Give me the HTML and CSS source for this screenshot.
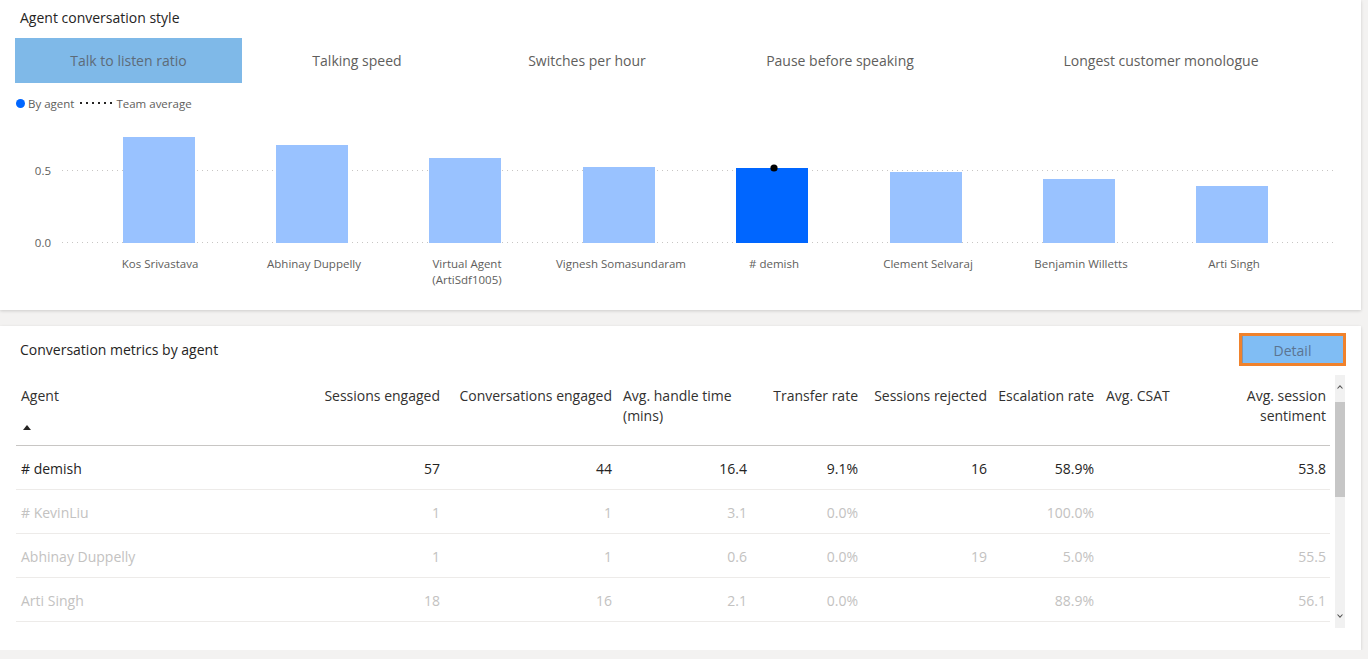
FILE: index.html
```html
<!DOCTYPE html>
<html lang="en">
<head>
<meta charset="utf-8">
<title>Agent conversation style</title>
<link rel="stylesheet" href="styles.css">
</head>
<body>
<div class="page">
  <section class="card card-style">
    <h2 class="card-title">Agent conversation style</h2>
    <div class="tabs">
      <div class="tab tab-active tab-w1">Talk to listen ratio</div>
      <div class="tab tab-w2">Talking speed</div>
      <div class="tab tab-w3">Switches per hour</div>
      <div class="tab tab-w4">Pause before speaking</div>
      <div class="tab tab-w5">Longest customer monologue</div>
    </div>
    <div class="legend">
      <span class="legend-dot"></span>
      <span class="legend-text">By agent</span>
      <svg class="legend-dots" width="34" height="4" viewBox="0 0 34 4"><g fill="#252423"><rect x="1" y="1" width="2" height="2"/><rect x="7" y="1" width="2" height="2"/><rect x="13" y="1" width="2" height="2"/><rect x="19" y="1" width="2" height="2"/><rect x="25" y="1" width="2" height="2"/><rect x="31" y="1" width="2" height="2"/></g></svg>
      <span class="legend-text">Team average</span>
    </div>
    <svg class="chart" width="1361" height="199" viewBox="0 111 1361 199">
      <g class="grid">
        <line x1="62" y1="170.5" x2="1333" y2="170.5"/>
        <line x1="62" y1="242.5" x2="1333" y2="242.5"/>
      </g>
      <g class="axis-labels">
        <text x="51" y="170" text-anchor="end" dominant-baseline="central">0.5</text>
        <text x="51" y="242" text-anchor="end" dominant-baseline="central">0.0</text>
      </g>
      <g class="bars">
        <rect x="123" y="137" width="72" height="106"/>
        <rect x="276" y="145" width="72" height="98"/>
        <rect x="429" y="158" width="72" height="85"/>
        <rect x="583" y="167" width="72" height="76"/>
        <rect class="bar-selected" x="736" y="168" width="72" height="75"/>
        <rect x="890" y="172" width="72" height="71"/>
        <rect x="1043" y="179" width="72" height="64"/>
        <rect x="1196" y="186" width="72" height="57"/>
      </g>
      <circle cx="774" cy="168" r="3.6" fill="#000"/>
      <g class="cat-labels">
        <text x="160" y="263" text-anchor="middle" dominant-baseline="central">Kos Srivastava</text>
        <text x="314" y="263" text-anchor="middle" dominant-baseline="central">Abhinay Duppelly</text>
        <text x="467" y="263" text-anchor="middle" dominant-baseline="central">Virtual Agent</text>
        <text x="467" y="279" text-anchor="middle" dominant-baseline="central">(ArtiSdf1005)</text>
        <text x="621" y="263" text-anchor="middle" dominant-baseline="central">Vignesh Somasundaram</text>
        <text x="774" y="263" text-anchor="middle" dominant-baseline="central"># demish</text>
        <text x="928" y="263" text-anchor="middle" dominant-baseline="central">Clement Selvaraj</text>
        <text x="1081" y="263" text-anchor="middle" dominant-baseline="central">Benjamin Willetts</text>
        <text x="1234" y="263" text-anchor="middle" dominant-baseline="central">Arti Singh</text>
      </g>
    </svg>
  </section>

  <section class="card card-metrics">
    <div class="metrics-head">
      <h2 class="card-title">Conversation metrics by agent</h2>
      <button class="detail-btn" type="button">Detail</button>
    </div>
    <div class="table-wrap">
      <div class="table">
        <div class="thead">
          <div class="th th-agent"><span>Agent</span><span class="sort-up"></span></div>
          <div class="th">Sessions engaged</div>
          <div class="th">Conversations engaged</div>
          <div class="th th-left th-aht">Avg. handle time<br>(mins)</div>
          <div class="th">Transfer rate</div>
          <div class="th">Sessions rejected</div>
          <div class="th">Escalation rate</div>
          <div class="th th-left th-csat">Avg. CSAT</div>
          <div class="th">Avg. session<br>sentiment</div>
        </div>
        <div class="tr tr-active">
          <div class="td td-agent"># demish</div>
          <div class="td">57</div>
          <div class="td">44</div>
          <div class="td">16.4</div>
          <div class="td">9.1%</div>
          <div class="td">16</div>
          <div class="td">58.9%</div>
          <div class="td"></div>
          <div class="td">53.8</div>
        </div>
        <div class="tr tr-dim">
          <div class="td td-agent"># KevinLiu</div>
          <div class="td">1</div>
          <div class="td">1</div>
          <div class="td">3.1</div>
          <div class="td">0.0%</div>
          <div class="td"></div>
          <div class="td">100.0%</div>
          <div class="td"></div>
          <div class="td"></div>
        </div>
        <div class="tr tr-dim">
          <div class="td td-agent">Abhinay Duppelly</div>
          <div class="td">1</div>
          <div class="td">1</div>
          <div class="td">0.6</div>
          <div class="td">0.0%</div>
          <div class="td">19</div>
          <div class="td">5.0%</div>
          <div class="td"></div>
          <div class="td">55.5</div>
        </div>
        <div class="tr tr-dim">
          <div class="td td-agent">Arti Singh</div>
          <div class="td">18</div>
          <div class="td">16</div>
          <div class="td">2.1</div>
          <div class="td">0.0%</div>
          <div class="td"></div>
          <div class="td">88.9%</div>
          <div class="td"></div>
          <div class="td">56.1</div>
        </div>
      </div>
      <div class="scrollbar">
        <svg class="scroll-arrow" width="10" height="8" viewBox="0 0 10 8"><path d="M2.5 5.5 L5 2.8 L7.5 5.5" fill="none" stroke="#555" stroke-width="1.1"/></svg>
        <div class="scroll-track"><div class="scroll-thumb"></div></div>
        <svg class="scroll-arrow" width="10" height="8" viewBox="0 0 10 8"><path d="M2.5 2.5 L5 5.2 L7.5 2.5" fill="none" stroke="#555" stroke-width="1.1"/></svg>
      </div>
    </div>
  </section>
</div>
</body>
</html>
```

FILE: styles.css
```css
* { box-sizing: border-box; }

html, body {
  margin: 0;
  padding: 0;
  background: #f3f2f1;
  font-family: "Open Sans", "Noto Sans", "Liberation Sans", sans-serif;
  color: #252423;
}

.page {
  width: 1361px;
  display: flex;
  flex-direction: column;
  gap: 16px;
}

.card {
  background: #ffffff;
  box-shadow: 0 1px 3px rgba(0, 0, 0, 0.16);
}

.card-style {
  height: 310px;
  padding-top: 8px;
}

.card-title {
  margin: 0 0 0 20px;
  font-size: 14px;
  font-weight: 400;
  line-height: 20px;
  color: #252423;
}

/* Tabs */
.tabs {
  display: flex;
  margin: 10px 0 0 15px;
  height: 45px;
}

.tab {
  height: 45px;
  line-height: 46px;
  text-align: center;
  font-size: 14px;
  color: #605e5c;
  white-space: nowrap;
}

.tab-active {
  background: #7fb9e8;
  color: #5d6b78;
}

.tab-w1 { width: 227px; }
.tab-w2 { width: 230px; }
.tab-w3 { width: 230px; }
.tab-w4 { width: 276px; }
.tab-w5 { width: 366px; }

/* Legend */
.legend {
  display: flex;
  align-items: center;
  gap: 3px;
  margin: 12px 0 0 16px;
  height: 16px;
  font-size: 11.5px;
  color: #605e5c;
}

.legend-dot {
  width: 9px;
  height: 9px;
  border-radius: 50%;
  background: #0066ff;
}

.legend-dots { display: block; margin: 0 0 0 2px; }

/* Chart */
.chart {
  display: block;
  font-family: "Open Sans", "Noto Sans", "Liberation Sans", sans-serif;
}

.grid line {
  stroke: #c8c6c4;
  stroke-width: 1;
  stroke-dasharray: 1 4;
}

.axis-labels text,
.cat-labels text {
  font-size: 11.5px;
  fill: #605e5c;
}

.bars rect { fill: #99c2ff; }
.bars .bar-selected { fill: #0066ff; }

/* Metrics card */
.card-metrics {
  height: 324px;
  padding-top: 7px;
}

.metrics-head {
  display: flex;
  align-items: center;
  justify-content: space-between;
  height: 33px;
  padding-right: 15px;
}

.detail-btn {
  width: 107px;
  height: 33px;
  border: 3px solid #f0822c;
  background: #80bdf4;
  box-shadow: inset 1px 0 0 #8496aa;
  color: #5b7491;
  font-family: inherit;
  font-size: 14px;
  padding: 0;
  padding-top: 2px;
}

.table-wrap {
  display: flex;
  margin: 9px 0 0 16px;
  gap: 5px;
  height: 253px;
}

.table {
  width: 1314px;
  font-size: 14px;
}

.thead,
.tr {
  display: grid;
  grid-template-columns: 284px 140px 172px 135px 111px 129px 107px 86px 146px;
  padding-right: 4px;
}

.thead {
  height: 71px;
  padding-top: 11px;
  border-bottom: 1px solid #c8c6c4;
  color: #323130;
  line-height: 20px;
}

.th {
  text-align: right;
  white-space: nowrap;
}

.th-left { text-align: left; }
.th-aht { padding-left: 11px; }
.th-csat { padding-left: 12px; }

.th-agent {
  text-align: left;
  padding-left: 5px;
  display: flex;
  flex-direction: column;
  align-items: flex-start;
}

.sort-up {
  width: 0;
  height: 0;
  margin: 19px 0 0 2px;
  border-left: 4.5px solid transparent;
  border-right: 4.5px solid transparent;
  border-bottom: 5px solid #252423;
}

.tr {
  height: 44px;
  padding-top: 2px;
  align-items: center;
  border-bottom: 1px solid #edebe9;
  line-height: 20px;
}

.td {
  text-align: right;
  white-space: nowrap;
}

.td-agent {
  text-align: left;
  padding-left: 5px;
}

.tr-active { color: #252423; }
.tr-dim { color: #c3c2c1; }

/* Scrollbar */
.scrollbar {
  width: 10px;
  height: 253px;
  background: #f1f1f1;
  display: flex;
  flex-direction: column;
  align-items: center;
}

.scroll-arrow {
  display: block;
  margin-top: 8px;
}

.scroll-track {
  flex: 1;
  width: 10px;
  padding-top: 11px;
}

.scroll-thumb {
  width: 10px;
  height: 95px;
  background: #c6c6c6;
}

.scrollbar .scroll-arrow:last-child {
  margin: 0 0 8px 0;
}
```
